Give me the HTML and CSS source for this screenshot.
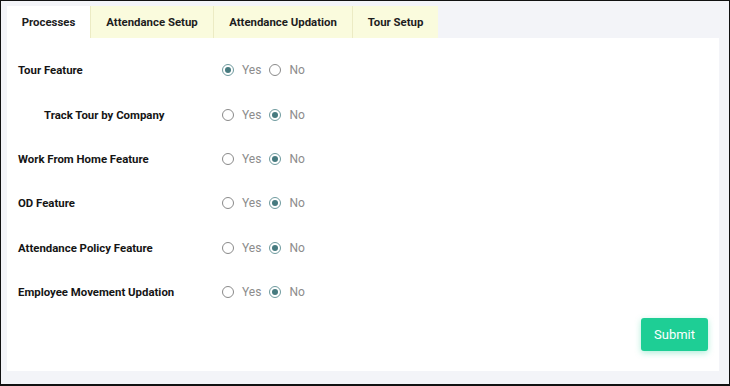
FILE: index.html
```html
<!DOCTYPE html>
<html lang="en">
<head>
    <meta charset="UTF-8">
    <meta name="viewport" content="width=device-width, initial-scale=1.0">
    <title>Processes</title>
    <link rel="stylesheet" href="styles.css">
</head>
<body>
    <div class="frame">
        <div class="tabs">
            <div class="tab active tab-processes">Processes</div>
            <div class="tab tab-setup">Attendance Setup</div>
            <div class="tab tab-updation">Attendance Updation</div>
            <div class="tab tab-tour">Tour Setup</div>
        </div>

        <div class="panel">
            <div class="row">
                <div class="label">Tour Feature</div>
                <div class="options">
                    <span class="radio checked"></span><span class="opt">Yes</span>
                    <span class="radio"></span><span class="opt">No</span>
                </div>
            </div>
            <div class="row">
                <div class="label sub">Track Tour by Company</div>
                <div class="options">
                    <span class="radio"></span><span class="opt">Yes</span>
                    <span class="radio checked"></span><span class="opt">No</span>
                </div>
            </div>
            <div class="row">
                <div class="label">Work From Home Feature</div>
                <div class="options">
                    <span class="radio"></span><span class="opt">Yes</span>
                    <span class="radio checked"></span><span class="opt">No</span>
                </div>
            </div>
            <div class="row">
                <div class="label">OD Feature</div>
                <div class="options">
                    <span class="radio"></span><span class="opt">Yes</span>
                    <span class="radio checked"></span><span class="opt">No</span>
                </div>
            </div>
            <div class="row">
                <div class="label">Attendance Policy Feature</div>
                <div class="options">
                    <span class="radio"></span><span class="opt">Yes</span>
                    <span class="radio checked"></span><span class="opt">No</span>
                </div>
            </div>
            <div class="row">
                <div class="label">Employee Movement Updation</div>
                <div class="options">
                    <span class="radio"></span><span class="opt">Yes</span>
                    <span class="radio checked"></span><span class="opt">No</span>
                </div>
            </div>

            <div class="actions">
                <button class="submit">Submit</button>
            </div>
        </div>
    </div>
</body>
</html>
```

FILE: styles.css
```css
* {
    margin: 0;
    padding: 0;
    box-sizing: border-box;
    font-family: 'Roboto', 'Liberation Sans', sans-serif;
}

body {
    width: 730px;
    height: 386px;
    overflow: hidden;
}

.frame {
    width: 730px;
    height: 386px;
    border: 1px solid #111;
    border-bottom-width: 2px;
    background: #f3f4f8;
    padding: 5px 10px 0 6px;
}

.tabs {
    display: flex;
    height: 32px;
}

.tab {
    display: flex;
    align-items: center;
    justify-content: center;
    background: #fafbdd;
    border-right: 1px solid #ecebc4;
    font-size: 11.4px;
    font-weight: 700;
    color: #1d1d1d;
    padding-bottom: 1px;
}

.tab.active {
    background: #fff;
}

.tab-processes { width: 84px; }
.tab-setup { width: 123px; }
.tab-updation { width: 139px; }
.tab-tour { width: 85px; border-right: none; }

.panel {
    background: #fff;
    height: 333px;
    padding: 10px 11px 0 11px;
}

.row {
    display: flex;
    align-items: center;
    height: 44.4px;
}

.label {
    width: 204px;
    font-size: 11.4px;
    font-weight: 700;
    color: #151515;
}

.label.sub {
    padding-left: 26px;
}

.options {
    display: flex;
    align-items: center;
}

.radio {
    width: 12px;
    height: 12px;
    border: 1px solid #8a8a8a;
    border-radius: 50%;
    display: flex;
    align-items: center;
    justify-content: center;
}

.radio.checked {
    border-color: #6e9a9e;
}

.radio.checked::after {
    content: '';
    width: 6px;
    height: 6px;
    border-radius: 50%;
    background: #467a7f;
}

.opt {
    font-size: 12px;
    color: #8c8c8c;
    margin-left: 8px;
    margin-right: 8px;
}

.actions {
    display: flex;
    justify-content: flex-end;
    margin-top: 4px;
}

.submit {
    width: 67px;
    height: 33px;
    border: none;
    border-radius: 3px;
    background: #1ece95;
    color: #fff;
    font-size: 13px;
    box-shadow: 0 2px 6px rgba(30, 206, 149, 0.35);
    cursor: pointer;
}
```
